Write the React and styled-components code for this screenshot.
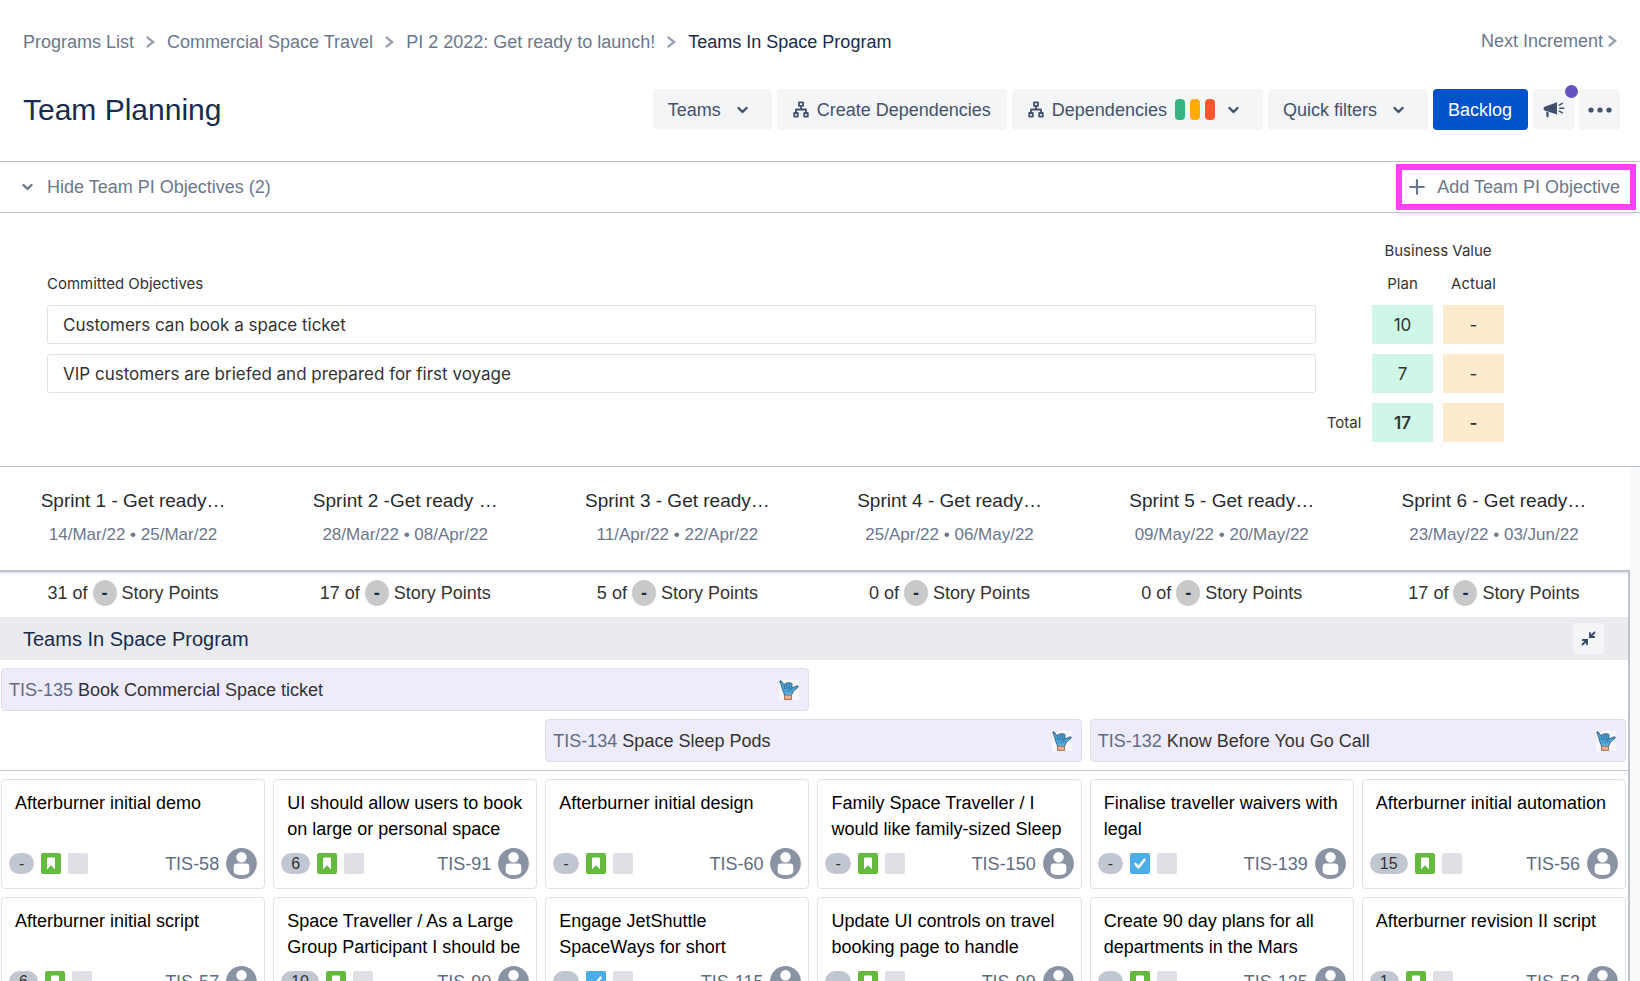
import React from "react";
import styled, { createGlobalStyle } from "styled-components";

const GlobalStyle = createGlobalStyle`
  *, *::before, *::after { box-sizing: border-box; }
  html, body { margin: 0; padding: 0; background: #fff; }
  body { font-family: "Liberation Sans", Arial, sans-serif; font-size: 18px; line-height: 24px; color: #333; }
  button, input { font: inherit; color: inherit; }
  a { color: inherit; text-decoration: none; }
  svg { display: block; flex: none; }
`;

const Page = styled.main`
  display: flex;
  flex-direction: column;
  height: 100vh;
  overflow: hidden;
`;

/* ---------- header ---------- */

const TopBar = styled.div`
  display: flex;
  justify-content: space-between;
  align-items: flex-start;
  padding: 30px 23px 0;
`;

const Crumbs = styled.nav`
  display: flex;
  align-items: center;
  gap: 12px;
  color: #6b778c;
`;

const CurrentCrumb = styled.span`
  color: #172b4d;
`;

const NextLink = styled.a`
  display: flex;
  align-items: center;
  gap: 5px;
  line-height: 22px;
  color: #6b778c;
`;

const TitleRow = styled.header`
  display: flex;
  align-items: center;
  justify-content: space-between;
  padding: 35px 20px 31px 23px;
`;

const Title = styled.h1`
  margin: 0;
  font-size: 30px;
  line-height: 40px;
  font-weight: 400;
  color: #172b4d;
`;

const Toolbar = styled.div`
  display: flex;
  gap: 5px;
`;

const ToolButton = styled.button`
  position: relative;
  display: flex;
  align-items: center;
  gap: ${(p) => p.$gap || 8}px;
  height: 41px;
  padding: 0 ${(p) => (p.$dropdown ? 24 : 16)}px 0 ${(p) => (p.$icon ? 16 : 15)}px;
  border: 0;
  border-radius: 4px;
  background: ${(p) => (p.$primary ? "#0052cc" : "#f4f5f7")};
  color: ${(p) => (p.$primary ? "#fff" : "#42526e")};
`;

const IconButton = styled(ToolButton)`
  width: 41px;
  padding: 0;
  justify-content: center;
`;

const Dot = styled.span`
  position: absolute;
  top: -4px;
  right: -4px;
  width: 13px;
  height: 13px;
  border-radius: 50%;
  background: #6554c0;
`;

const Statuses = styled.span`
  display: flex;
  gap: 5px;
  margin-right: 5px;
`;

const Status = styled.span`
  width: 10px;
  height: 21px;
  border-radius: 4px;
  background: ${(p) => p.$color};
`;

/* ---------- objectives ---------- */

const ObjectivesBar = styled.div`
  display: flex;
  align-items: center;
  justify-content: space-between;
  height: 52px;
  padding: 0 4px 0 22px;
  border-top: 1px solid #b9c0cc;
  border-bottom: 1px solid #b9c0cc;
`;

const TextButton = styled.button`
  display: flex;
  align-items: center;
  gap: 14px;
  padding: 0;
  border: 0;
  background: none;
  color: #6b778c;
`;

const AddButton = styled(TextButton)`
  height: 46px;
  padding: 0 10px 0 7px;
  gap: 12px;
  border: 6px solid #ff40ff;
`;

const Objectives = styled.section`
  padding: 16px 126px 14px 37px;
  border-bottom: 1px solid #b9c0cc;
  font-family: Inter, sans-serif;
  color: #333;
`;

const ObjectivesTable = styled.table`
  width: 100%;
  border-collapse: separate;
  border-spacing: 10px;

  th, td { padding: 0; }
  th { height: 23px; font-size: 15px; line-height: 23px; font-weight: 400; }
`;

const StartHead = styled.th`
  text-align: left;
`;

const TotalHead = styled.th`
  width: 36px;
`;

const ObjectiveInput = styled.input`
  display: block;
  width: 100%;
  height: 39px;
  padding: 0 15px;
  border: 1px solid #dfe1e6;
  border-radius: 3px;
  background: #fff;
  font-size: 17px;
  outline: none;
`;

const Value = styled.td`
  width: 61px;
  min-width: 61px;
  height: 39px;
  text-align: center;
  font-size: 17px;
  font-weight: ${(p) => (p.$total ? 600 : 400)};
  background: ${(p) => (p.$actual ? "#fdebd0" : "#cff7e7")};
`;

/* ---------- board ---------- */

const BoardArea = styled.section`
  flex: 1;
  min-height: 0;
  overflow: hidden;
  display: flex;
  flex-direction: column;
  padding-right: 10px;
  background: #f8f9fb;
`;

const Columns = styled.div`
  display: grid;
  grid-template-columns: repeat(6, minmax(0, 1fr));
  gap: 8px;
  padding: 0 2px 0 1px;
`;

const SprintHeader = styled(Columns)`
  background: #fff;
  padding: 21px 4px 22px 1px;
  text-align: center;
`;

const SprintName = styled.h2`
  margin: 0;
  font-size: 19px;
  line-height: 26px;
  font-weight: 400;
  color: #292a2e;
`;

const SprintDates = styled.div`
  padding-top: 8px;
  font-size: 17px;
  line-height: 26px;
  color: #6b778c;
`;

const BoardBody = styled.div`
  flex: 1;
  min-height: 0;
  overflow: hidden;
  border-top: 2px solid #bcc3ce;
  border-right: 2px solid #bcc3ce;
  background: #fff;
  box-shadow: inset 0 3px 2px -2px #d5dae1;
`;

const Points = styled.div`
  display: flex;
  align-items: center;
  justify-content: center;
  gap: 5px;
  height: 45px;
  padding-bottom: 3px;
`;

const PointsLimit = styled.span`
  width: 24px;
  height: 26px;
  border-radius: 50%;
  background: #c9c9c9;
  color: #172b4d;
  font-weight: 700;
  line-height: 26px;
  text-align: center;
`;

const TeamBar = styled.div`
  display: flex;
  align-items: center;
  justify-content: space-between;
  height: 43px;
  padding: 0 24px 0 23px;
  background: #eaebef;
`;

const TeamName = styled.h2`
  margin: 0;
  font-size: 20px;
  line-height: 24px;
  font-weight: 400;
  color: #172b4d;
`;

const CollapseButton = styled.button`
  display: flex;
  align-items: center;
  justify-content: center;
  width: 31px;
  height: 31px;
  padding: 0;
  border: 0;
  border-radius: 4px;
  background: #f4f5f7;
`;

const Features = styled(Columns)`
  padding-top: 8px;
  padding-bottom: 8px;
  border-bottom: 1px solid #c1c7d0;
`;

const Feature = styled.article`
  grid-column: ${(p) => p.$from} / span ${(p) => p.$span};
  grid-row: ${(p) => p.$row};
  display: flex;
  align-items: center;
  gap: 5px;
  height: 43px;
  padding: 0 9px 0 7px;
  border: 1px solid #dddce8;
  border-radius: 4px;
  background: #eeebfb;

  svg { margin-left: auto; }
`;

const IssueKey = styled.a`
  color: #5e6c84;
`;

const Cards = styled(Columns)`
  padding-top: 8px;
`;

const Card = styled.article`
  height: 110px;
  padding: 10px 7px 9px;
  border: 1px solid #dfe1e6;
  border-radius: 4px;
  background: #fff;
`;

const CardTitle = styled.h3`
  height: 52px;
  margin: 0 6px;
  font-size: 18px;
  line-height: 26px;
  font-weight: 400;
  color: #000;
`;

const CardFooter = styled.div`
  display: flex;
  align-items: center;
  gap: 7px;
  padding-top: 6px;

  a { margin-left: auto; }
`;

const Estimate = styled.span`
  height: 21px;
  padding: 0 10px;
  border-radius: 11px;
  background: #c1c7d0;
  color: #333;
  font-size: 16px;
  line-height: 21px;
`;

const Placeholder = styled.span`
  width: 20px;
  height: 21px;
  border-radius: 2px;
  background: #dfe0e6;
`;

/* ---------- drawings ---------- */

const ChevronDown = () => (
  <svg width="11" height="8" viewBox="0 0 11 8" fill="none" stroke="currentColor" strokeWidth="2.4" strokeLinecap="round" strokeLinejoin="round">
    <path d="M1.5 2l4 4 4-4" />
  </svg>
);

const ChevronRight = () => (
  <svg width="9" height="12" viewBox="0 0 9 12" fill="none" stroke="#97a0af" strokeWidth="2.4" strokeLinecap="round">
    <path d="M1.6 1.6l5.600 4.400-5.600 4.400" />
  </svg>
);

const Hierarchy = () => (
  <svg width="16" height="17" viewBox="0 0 16 17" fill="none" stroke="currentColor" strokeWidth="1.8" strokeLinejoin="round">
    <rect x="6" y="1.3" width="4" height="3.6" />
    <rect x="1.2" y="12" width="3.6" height="3.6" />
    <rect x="11.2" y="12" width="3.6" height="3.6" />
    <path d="M8 5v3.5M3 12V8.5h10V12" />
  </svg>
);

const Megaphone = () => (
  <svg width="22" height="17" viewBox="0 0 22 17">
    <path d="M14 1.2v12.2L1.6 9.4C.2 8.9.2 6.300 1.600 5.700z" fill="currentColor" />
    <path d="M3.200 10.600l2.600.8-.2 4.400c0 .6-2 .6-2.100 0z" fill="currentColor" />
    <path d="M16.300 4.200l3-1.800M16.800 7.200h3.900M16.300 10.200l3 1.600" stroke="currentColor" strokeWidth="1.500" strokeLinecap="round" />
  </svg>
);

const More = () => (
  <svg width="24" height="6" viewBox="0 0 24 6" fill="currentColor">
    <circle cx="3" cy="3" r="2.6" />
    <circle cx="12" cy="3" r="2.6" />
    <circle cx="21" cy="3" r="2.6" />
  </svg>
);

const Plus = () => (
  <svg width="16" height="16" viewBox="0 0 16 16" stroke="currentColor" strokeWidth="2.2" strokeLinecap="round">
    <path d="M8 1.200v13.600M1.200 8h13.600" />
  </svg>
);

const Collapse = () => (
  <svg width="15" height="15" viewBox="0 0 15 15" fill="none" stroke="#344563" strokeWidth="1.800" strokeLinecap="round">
    <path d="M13.500 1.500L9.500 5.500M9 1.800V6h4.200M1.500 13.500L5.500 9.500M1.800 9H6v4.200" />
  </svg>
);

const Shaka = () => (
  <svg width="20" height="20" viewBox="0 0 20 20" role="img" aria-label="Shaka">
    <rect width="20" height="20" fill="#f7f6f8" />
    <path d="M5.500 14.500h6.800l.3 5H5.600z" fill="#eeb08c" stroke="#8b5a45" strokeWidth=".8" />
    <path d="M.8 1C1.600.2 2.600.8 3 2l2.500 3C5.700 3.500 7 2.800 8 3.200 9 2.400 10 2.500 10.800 3 12 2.500 13 3 13 4.500V8l4.500-2c1.600-.5 2.600.5 1.400 1.400L14.500 11 12.600 15H5.500C5 12.600 3.300 10.500 3 8 2.800 5.500 1 3.600.8 1z" fill="#4aa3d6" stroke="#2b4f6d" strokeWidth=".8" />
    <path d="M8 3.600v3.200M10.600 3.500v3.200M5.600 5.500v2.300M5.600 8.400l5.400-.6 1.500 1.200-3 1.800" fill="none" stroke="#27618c" strokeWidth=".8" />
    <path d="M6 14h6.500" stroke="#7db8dc" strokeWidth="1.200" />
  </svg>
);

const StoryIcon = () => (
  <svg width="20" height="21" viewBox="0 0 20 21" role="img" aria-label="Story">
    <rect width="20" height="21" rx="2" fill="#63ba3c" />
    <path d="M6 5.500a1 1 0 011-1h6a1 1 0 011 1V16.500l-4-4.300-4 4.300z" fill="#fff" />
  </svg>
);

const TaskIcon = () => (
  <svg width="20" height="21" viewBox="0 0 20 21" role="img" aria-label="Task">
    <rect width="20" height="21" rx="2" fill="#4bade8" />
    <path d="M5.500 11l3 3.300 6-7.500" fill="none" stroke="#fff" strokeWidth="2.600" strokeLinecap="round" strokeLinejoin="round" />
  </svg>
);

const Avatar = () => (
  <svg width="31" height="31" viewBox="0 0 31 31" role="img" aria-label="Unassigned">
    <circle cx="15.500" cy="15.500" r="15.400" fill="#8993a4" />
    <circle cx="15.500" cy="9.200" r="5.200" fill="#fff" />
    <path d="M7.700 18.600a3.200 3.200 0 013.200-3.200h9.200a3.200 3.200 0 013.200 3.200V23.500c0 2.500-4 3.600-7.800 3.600s-7.800-1.100-7.800-3.600z" fill="#fff" />
  </svg>
);

/* ---------- data ---------- */

const crumbs = ["Programs List", "Commercial Space Travel", "PI 2 2022: Get ready to launch!"];

const objectives = [
  { name: "Customers can book a space ticket", plan: "10" },
  { name: "VIP customers are briefed and prepared for first voyage", plan: "7" },
];

const sprints = [
  { name: "Sprint 1 - Get ready…", dates: "14/Mar/22 • 25/Mar/22", points: 31 },
  { name: "Sprint 2 -Get ready …", dates: "28/Mar/22 • 08/Apr/22", points: 17 },
  { name: "Sprint 3 - Get ready…", dates: "11/Apr/22 • 22/Apr/22", points: 5 },
  { name: "Sprint 4 - Get ready…", dates: "25/Apr/22 • 06/May/22", points: 0 },
  { name: "Sprint 5 - Get ready…", dates: "09/May/22 • 20/May/22", points: 0 },
  { name: "Sprint 6 - Get ready…", dates: "23/May/22 • 03/Jun/22", points: 17 },
];

const features = [
  { id: "TIS-135", name: "Book Commercial Space ticket", from: 1, span: 3, row: 1 },
  { id: "TIS-134", name: "Space Sleep Pods", from: 3, span: 2, row: 2 },
  { id: "TIS-132", name: "Know Before You Go Call", from: 5, span: 2, row: 2 },
];

const cards = [
  { id: "TIS-58", title: "Afterburner initial demo", points: "-" },
  { id: "TIS-91", title: "UI should allow users to book on large or personal space", points: "6" },
  { id: "TIS-60", title: "Afterburner initial design", points: "-" },
  { id: "TIS-150", title: "Family Space Traveller / I would like family-sized Sleep", points: "-" },
  { id: "TIS-139", title: "Finalise traveller waivers with legal", points: "-", task: true },
  { id: "TIS-56", title: "Afterburner initial automation", points: "15" },
  { id: "TIS-57", title: "Afterburner initial script", points: "6" },
  { id: "TIS-90", title: "Space Traveller / As a Large Group Participant I should be", points: "10" },
  { id: "TIS-115", title: "Engage JetShuttle SpaceWays for short", points: "-", task: true },
  { id: "TIS-99", title: "Update UI controls on travel booking page to handle", points: "-" },
  { id: "TIS-125", title: "Create 90 day plans for all departments in the Mars", points: "-" },
  { id: "TIS-52", title: "Afterburner revision II script", points: "1" },
];

export default function App() {
  return (
    <>
      <GlobalStyle />
      <Page>
        <TopBar>
          <Crumbs aria-label="Breadcrumb">
            {crumbs.map((name) => (
              <React.Fragment key={name}>
                <a href="#">{name}</a>
                <ChevronRight />
              </React.Fragment>
            ))}
            <CurrentCrumb>Teams In Space Program</CurrentCrumb>
          </Crumbs>
          <NextLink href="#">
            Next Increment
            <ChevronRight />
          </NextLink>
        </TopBar>

        <TitleRow>
          <Title>Team Planning</Title>
          <Toolbar>
            <ToolButton $dropdown $gap={16}>
              Teams
              <ChevronDown />
            </ToolButton>
            <ToolButton $icon>
              <Hierarchy />
              Create Dependencies
            </ToolButton>
            <ToolButton $icon $dropdown>
              <Hierarchy />
              Dependencies
              <Statuses>
                <Status $color="#36b37e" />
                <Status $color="#ffab00" />
                <Status $color="#ff5630" />
              </Statuses>
              <ChevronDown />
            </ToolButton>
            <ToolButton $dropdown $gap={16}>
              Quick filters
              <ChevronDown />
            </ToolButton>
            <ToolButton $primary>Backlog</ToolButton>
            <IconButton aria-label="Announcements">
              <Megaphone />
              <Dot />
            </IconButton>
            <IconButton aria-label="More">
              <More />
            </IconButton>
          </Toolbar>
        </TitleRow>

        <ObjectivesBar>
          <TextButton>
            <ChevronDown />
            Hide Team PI Objectives (2)
          </TextButton>
          <AddButton>
            <Plus />
            Add Team PI Objective
          </AddButton>
        </ObjectivesBar>

        <Objectives>
          <ObjectivesTable>
            <thead>
              <tr>
                <th />
                <TotalHead />
                <th colSpan={2}>Business Value</th>
              </tr>
              <tr>
                <StartHead>Committed Objectives</StartHead>
                <th />
                <th>Plan</th>
                <th>Actual</th>
              </tr>
            </thead>
            <tbody>
              {objectives.map((o) => (
                <tr key={o.name}>
                  <td>
                    <ObjectiveInput aria-label="Committed objective" readOnly value={o.name} />
                  </td>
                  <td />
                  <Value>{o.plan}</Value>
                  <Value $actual>-</Value>
                </tr>
              ))}
              <tr>
                <td />
                <th scope="row">Total</th>
                <Value $total>17</Value>
                <Value $total $actual>-</Value>
              </tr>
            </tbody>
          </ObjectivesTable>
        </Objectives>

        <BoardArea>
          <SprintHeader>
            {sprints.map((s) => (
              <div key={s.name}>
                <SprintName>{s.name}</SprintName>
                <SprintDates>{s.dates}</SprintDates>
              </div>
            ))}
          </SprintHeader>
          <BoardBody>
            <Columns>
              {sprints.map((s) => (
                <Points key={s.name}>
                  <span>{s.points} of</span>
                  <PointsLimit>-</PointsLimit>
                  <span>Story Points</span>
                </Points>
              ))}
            </Columns>
            <TeamBar>
              <TeamName>Teams In Space Program</TeamName>
              <CollapseButton aria-label="Collapse">
                <Collapse />
              </CollapseButton>
            </TeamBar>
            <Features>
              {features.map((f) => (
                <Feature key={f.id} $from={f.from} $span={f.span} $row={f.row}>
                  <IssueKey href="#">{f.id}</IssueKey>
                  <span>{f.name}</span>
                  <Shaka />
                </Feature>
              ))}
            </Features>
            <Cards>
              {cards.map((c) => (
                <Card key={c.id}>
                  <CardTitle>{c.title}</CardTitle>
                  <CardFooter>
                    <Estimate>{c.points}</Estimate>
                    {c.task ? <TaskIcon /> : <StoryIcon />}
                    <Placeholder />
                    <IssueKey href="#">{c.id}</IssueKey>
                    <Avatar />
                  </CardFooter>
                </Card>
              ))}
            </Cards>
          </BoardBody>
        </BoardArea>
      </Page>
    </>
  );
}
